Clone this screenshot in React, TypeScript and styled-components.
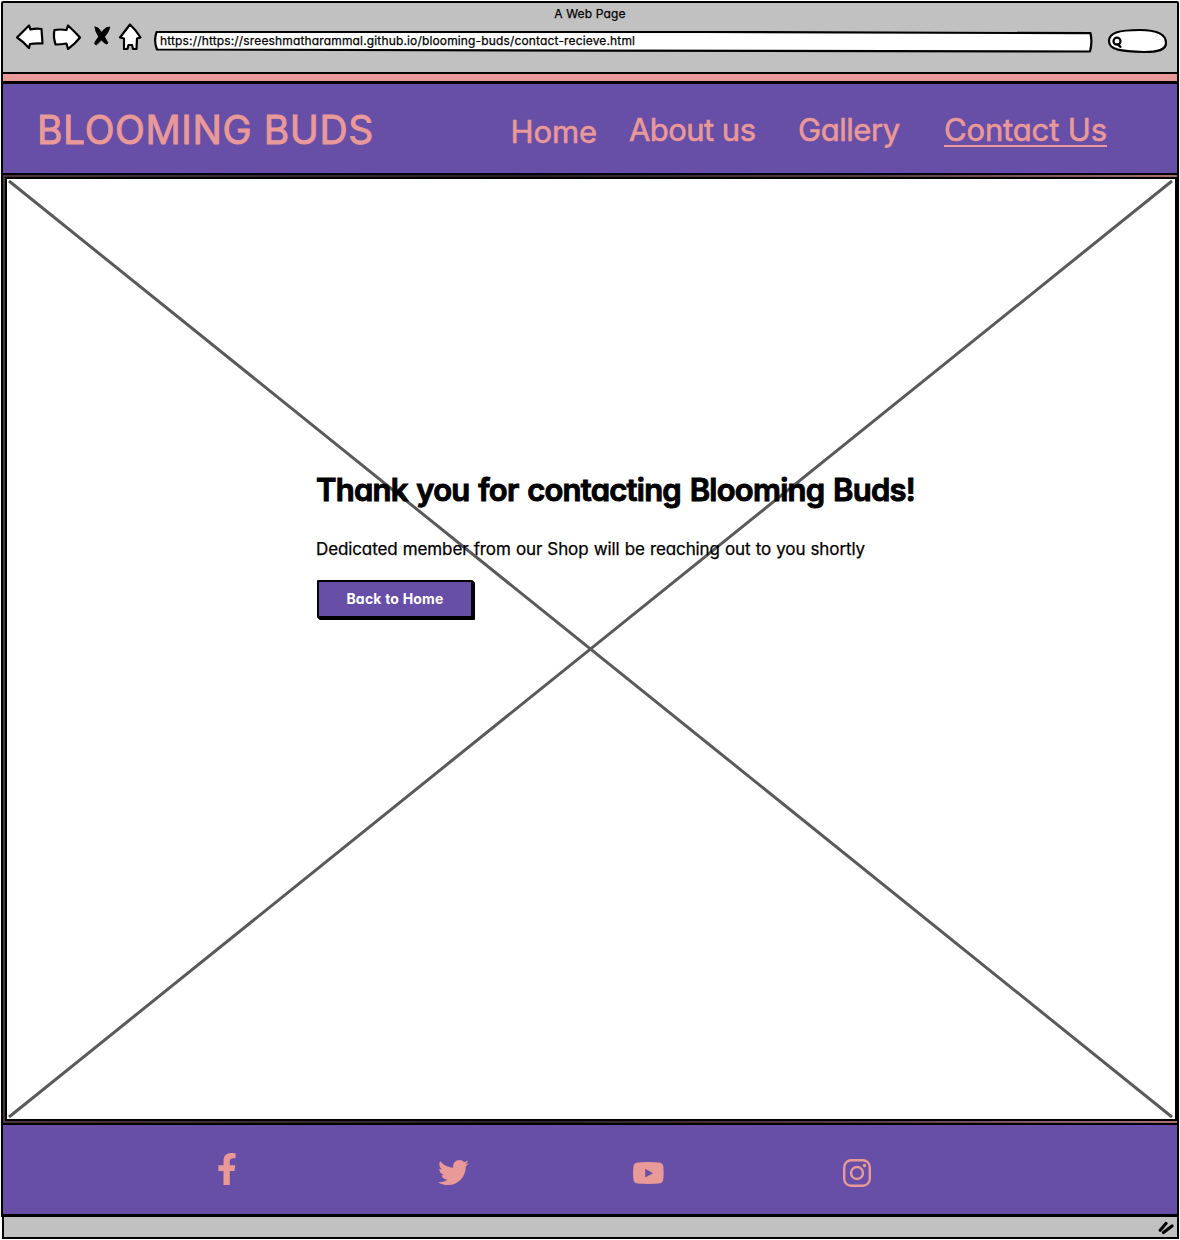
import React from "react";
import styled, { createGlobalStyle } from "styled-components";
import { FaFacebookF, FaTwitter } from "react-icons/fa";

const Global = createGlobalStyle`
  * { box-sizing: border-box; }
  body { margin: 0; background: #fff; }
`;

const pink = "#ea9999";
const purple = "#674ea7";
const grey = "#c1c1c1";

const Browser = styled.div`
  width: 1180px;
  height: 1240px;
  display: flex;
  flex-direction: column;
  padding: 1px;
  font-family: Inter, "Open Sans", sans-serif;
  font-feature-settings: "cv11";
`;

const Chrome = styled.header`
  height: 73px;
  background: ${grey};
  border: 2px solid #000;
  border-radius: 2px 2px 0 0;
  display: flex;
  flex-direction: column;
`;

const Label = styled.span<{ size: number; spacing?: number; words?: number; weight?: number; stroke?: number }>`
  font-size: ${(p) => p.size}px;
  line-height: 1.2;
  letter-spacing: ${(p) => p.spacing ?? 0}px;
  word-spacing: ${(p) => p.words ?? 0}px;
  font-weight: ${(p) => p.weight ?? 400};
  -webkit-text-stroke: ${(p) => p.stroke ?? 0}px currentColor;
  white-space: nowrap;
`;

const TitleRow = styled.div`
  height: 21px;
  display: flex;
  justify-content: center;
  align-items: center;
  padding-top: 1px;
`;

const ControlRow = styled.div`
  display: flex;
  align-items: flex-start;
  padding-left: 11px;
`;

const NavIcons = styled.svg`
  width: 132px;
  height: 34px;
  display: block;
  margin-top: -4px;
`;

const Address = styled.div`
  position: relative;
  width: 940px;
  height: 23px;
  margin: 6px 0 0 7px;
  display: flex;
  align-items: center;
  padding: 0 0 1px 7px;
`;

const AddressOutline = styled.svg`
  position: absolute;
  inset: 0;
  width: 100%;
  height: 100%;
`;

const AddressText = styled.div`
  position: relative;
  display: flex;
`;

const Search = styled.svg`
  width: 62px;
  height: 28px;
  margin: 3px 0 0 13px;
  display: block;
`;

const Shell = styled.main`
  flex: 1;
  display: flex;
  flex-direction: column;
  background: ${pink};
  border-left: 2px solid #000;
  border-right: 2px solid #000;
`;

const Bar = styled.nav`
  margin-top: 7px;
  height: 94px;
  border: 0 solid #000;
  border-width: 3px 0 2px;
  background: ${purple};
  color: ${pink};
  display: flex;
  align-items: flex-start;
  padding: 0 0 0 34px;
`;

const Brand = styled.div`
  width: 473.5px;
  padding-top: 23px;
`;

const Link = styled.div<{ width: number; top: number }>`
  width: ${(p) => p.width}px;
  padding-top: ${(p) => p.top}px;
`;

const Current = styled.span`
  display: inline-block;
  height: 36px;
  border-bottom: 2px solid ${pink};
`;

const HeroFrame = styled.section`
  flex: 1;
  display: grid;
  padding: 2px 0 2px 2px;
  background: linear-gradient(90deg, #4a3636 0%, #2a2020 45%, #5c4040 75%, #a87070 100%);
`;

const Hero = styled.div`
  border: 2px solid #000;
  border-right-width: 3px;
  background: #fff;
  display: grid;
`;

const Cross = styled.svg`
  grid-area: 1 / 1;
  width: 1168px;
  height: 940px;
  display: block;
`;

const Message = styled.div`
  grid-area: 1 / 1;
  z-index: 1;
  display: flex;
  flex-direction: column;
  align-items: flex-start;
  padding: 292px 0 0 309px;
`;

const Sub = styled.div`
  margin-top: 31px;
`;

const Button = styled.button`
  width: 156px;
  height: 38px;
  margin: 20px 0 0 1px;
  padding: 0 0 2px;
  border: 2px solid #000;
  border-radius: 1px;
  background: ${purple};
  box-shadow: 1px 1px 0 #000, 2px 2px 0 #000;
  color: #fff;
  font: inherit;
  font-feature-settings: inherit;
`;

const Footer = styled.footer`
  height: 94px;
  border: 0 solid #000;
  border-width: 2px 0 3px;
  background: ${purple};
  color: ${pink};
  display: flex;
  align-items: flex-start;
  padding: 28px 0 0 208px;
`;

const Social = styled.div<{ width: number; top: number }>`
  width: ${(p) => p.width}px;
  padding-top: ${(p) => p.top}px;
  svg { display: block; }
`;

const Status = styled.div`
  height: 22px;
  margin-left: 1px;
  background: ${grey};
  border: 2px solid #000;
  border-top: 0;
  display: flex;
  justify-content: flex-end;
  padding: 3px 2px 0 0;
`;

export default function App() {
  return (
    <>
      <Global />
      <Browser>
        <Chrome>
          <TitleRow>
            <Label size={12} stroke={0.25} spacing={0.15}>A Web Page</Label>
          </TitleRow>
          <ControlRow>
            <NavIcons viewBox="14 20 132 34" fill="#fff" stroke="#000" strokeWidth="2.2" strokeLinejoin="round" strokeLinecap="round">
              <path d="M17 37.500 29 25.500 30.500 29.500Q36 28 41.500 29L42.500 43.500Q36 43 30 44L29 48Q24 42 17 37.500Z" />
              <path d="M80 37.500Q74 31 68 25.500L66.500 30Q60 29 54.500 30Q53 36 55.500 44.500Q61 44.500 66.500 43.500L68 49Q75 44 80 37.500Z" />
              <g fill="#000" strokeWidth="0.8">
                <path d="M95 27Q98 26.500 101 31.500Q105 37 108 43Q107 45 104.500 43Q101 40 98 35.500Q95 31 95 27Z" />
                <path d="M109.500 27.200Q110 29 106.500 34.500Q101 41 96.500 44.800Q94 45 95 42Q99 36 103 30.500Q107 26 109.500 27.200Z" />
              </g>
              <path d="M130 24.500Q125 31 120 37.500L124 38.500 124 49H127.500L128.500 45H132L133 49H136.500L137 38.500 140.500 37.500Q136 30 130 24.500Z" />
            </NavIcons>
            <Address>
              <AddressOutline viewBox="153 30 940 23" fill="#fff" stroke="#000" strokeWidth="2.2" strokeLinejoin="round">
                <path d="M156.500 32Q400 31 700 32T1090.500 33.200Q1092.500 42 1090 51.500Q800 52 600 50.700T157 49.500Q153.500 41 156.500 32Z" />
              </AddressOutline>
              <AddressText>
                <Label size={12} stroke={0.25} spacing={0.152}>https://https://sreeshmatharammal.github.io/blooming-buds/contact-recieve.html</Label>
              </AddressText>
            </Address>
            <Search viewBox="1106 27 62 28" fill="#fff" stroke="#000" strokeWidth="2.2" strokeLinecap="round">
              <path d="M1109 41C1109 33 1118 30 1140 30C1158 30 1166 34 1166 43C1166 50 1158 52 1144 52C1121 51.500 1109 50 1109 41Z" />
              <circle cx="1117" cy="41.200" r="3.500" />
              <path d="M1117.500 44.200 1120.500 46.800" />
            </Search>
          </ControlRow>
        </Chrome>
        <Shell>
          <Bar>
            <Brand><Label size={39} stroke={0.9} spacing={0.6}>BLOOMING BUDS</Label></Brand>
            <Link width={118.5} top={29}><Label size={31} stroke={0.6} spacing={-0.1}>Home</Label></Link>
            <Link width={169} top={27}><Label size={31} stroke={0.6} spacing={-0.55}>About us</Label></Link>
            <Link width={146} top={27}><Label size={31} stroke={0.6} spacing={-0.45}>Gallery</Label></Link>
            <Link width={170} top={27}><Current><Label size={31} stroke={0.6} spacing={-0.15}>Contact Us</Label></Current></Link>
          </Bar>
          <HeroFrame>
            <Hero>
              <Cross viewBox="7 179 1168 940" stroke="#5a5a5a" strokeWidth="3">
                <path d="M9 181 1172 1117M1172 181 9 1117" />
              </Cross>
              <Message>
                <Label size={31} weight={600} stroke={1} spacing={-0.75} words={1.6}>Thank you for contacting Blooming Buds!</Label>
                <Sub><Label size={17} stroke={0.25} spacing={-0.11} words={0.5}>Dedicated member from our Shop will be reaching out to you shortly</Label></Sub>
                <Button><Label size={14} weight={700} spacing={0.2}>Back to Home</Label></Button>
              </Message>
            </Hero>
          </HeroFrame>
          <Footer>
            <Social width={227} top={0}><FaFacebookF size={32} /></Social>
            <Social width={195} top={4}><FaTwitter size={31} /></Social>
            <Social width={210} top={9}>
              <svg width="31" height="22" viewBox="0 0 31 22" fill="currentColor" fillRule="evenodd">
                <path d="M4.500 .5Q15 -.4 26 .5Q30 1 30.300 4.500Q30.900 11 30.300 17.500Q30 21 26 21.500Q15 22.400 4.500 21.500Q.8 21 .4 17.500Q-.2 11 .4 4.500Q.8 1 4.500 .5ZM12.200 6.800V15.600L20 11.200Z" />
              </svg>
            </Social>
            <Social width={28} top={6}>
              <svg width="28" height="28" viewBox="0 0 28 28" fill="none" stroke="currentColor" strokeWidth="2.4">
                <rect x="1.200" y="1.200" width="25.600" height="25.600" rx="7" />
                <circle cx="14" cy="14" r="6" />
                <circle cx="21.500" cy="6.500" r="1.700" fill="currentColor" stroke="none" />
              </svg>
            </Social>
          </Footer>
        </Shell>
        <Status>
          <svg width="17" height="15" viewBox="0 0 17 15" fill="none" stroke="#000" strokeWidth="3.2" strokeLinecap="round">
            <path d="M2.200 10.200 8 3.500M5.500 12.500 14 6" />
          </svg>
        </Status>
      </Browser>
    </>
  );
}
